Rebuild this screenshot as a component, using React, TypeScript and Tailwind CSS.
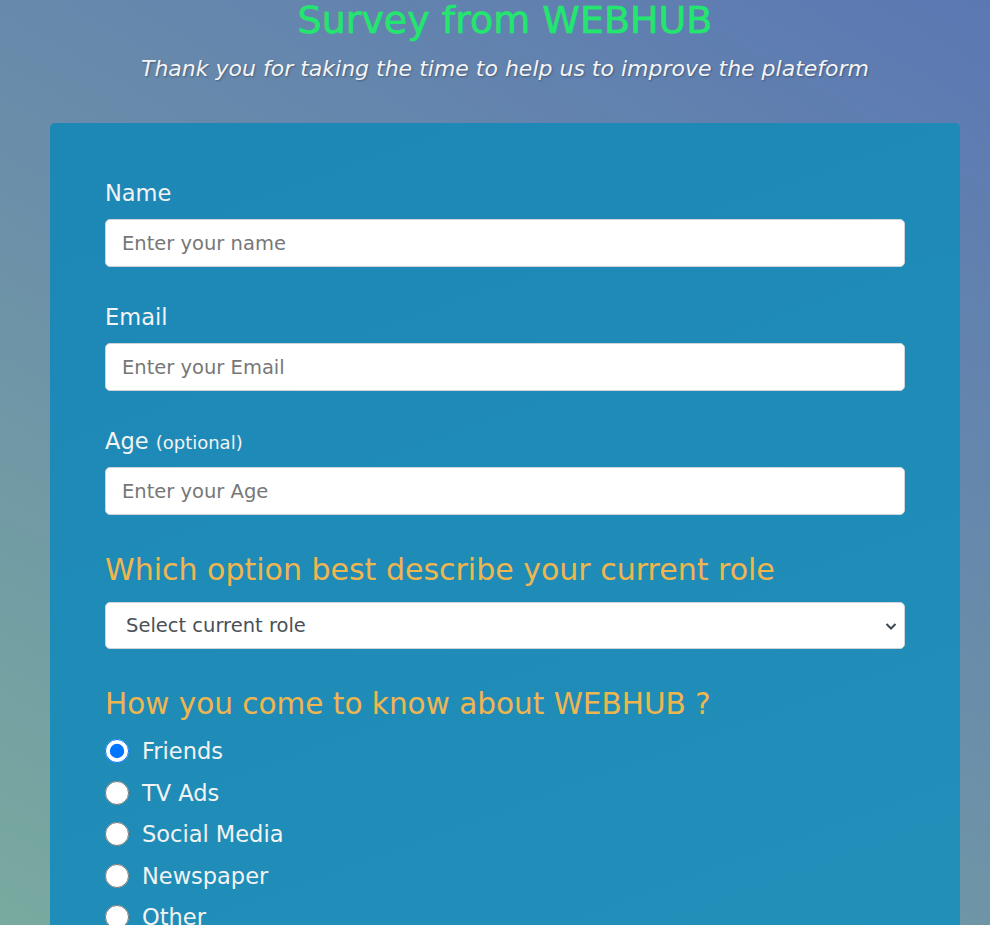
import React from "react";

const font = { fontFamily: '"DejaVu Sans", "Open Sans", sans-serif' };

const inputClass =
  "block h-12 w-full rounded-[5px] border border-[#ced4da] bg-white px-4 text-[19.5px] text-[#495057] placeholder:text-[#777] focus:outline-none";

const labelClass = "mb-[11px] block h-[30px] text-[22.5px] leading-[30px] text-[#f3f3f3]";

const sources = ["Friends", "TV Ads", "Social Media", "Newspaper", "Other"];

export default function App() {
  return (
    <div
      className="h-[925px] w-full overflow-hidden bg-[linear-gradient(30deg,#79aa9f_0%,#6b8fa9_50%,#5b78b3_100%)]"
      style={font}
    >
      <div className="ml-[50px] w-[910px]">
        <header className="text-center">
          <h1 className="mt-[-6px] text-[38px] leading-[52px] text-[#23e66e] [-webkit-text-stroke:0.6px_#23e66e]">
            Survey from WEBHUB
          </h1>
          <p className="mt-2 text-[22px] leading-[30px] italic text-[#f4f4f4] [text-shadow:1px_1px_2px_rgba(0,0,0,0.3)]">
            Thank you for taking the time to help us to improve the plateform
          </p>
        </header>

        <form className="mt-[39px] rounded-[5px] bg-[linear-gradient(160deg,#1d87b6_0%,#2190b9_100%)] px-[55px] pt-[55px] pb-10">
          <div className="mb-[35px]">
            <label className={labelClass}>Name</label>
            <input className={inputClass} placeholder="Enter your name" />
          </div>
          <div className="mb-[35px]">
            <label className={labelClass}>Email</label>
            <input className={inputClass} placeholder="Enter your Email" />
          </div>
          <div className="mb-[35px]">
            <label className={labelClass}>
              Age <span className="text-[18px] leading-none">(optional)</span>
            </label>
            <input className={inputClass} placeholder="Enter your Age" />
          </div>

          <h3 className="mb-3 text-[30px] leading-10 text-[#efb54f]">
            Which option best describe your current role
          </h3>
          <div className="relative">
            <select className="block h-[47px] w-full appearance-none rounded-[5px] border border-[#ced4da] bg-white px-5 text-[19.5px] text-[#495057]">
              <option>Select current role</option>
              <option>Student</option>
              <option>Full time job</option>
              <option>Prefer not to say</option>
            </select>
            <svg
              className="pointer-events-none absolute top-1/2 right-[8px] h-3 w-3 -translate-y-1/2"
              viewBox="0 0 12 12"
              fill="none"
              stroke="#3f4650"
              strokeWidth="2"
            >
              <path d="M1.5 4 6 8.5 10.5 4" />
            </svg>
          </div>

          <h3 className="mt-[35px] mb-3 text-[29.5px] leading-10 text-[#efb54f]">
            How you come to know about WEBHUB ?
          </h3>
          <div className="flex flex-col gap-[11.5px]">
            {sources.map((s, i) => (
              <label
                key={s}
                className="flex h-[30px] items-center gap-[13px] text-[22.5px] leading-[30px] text-[#f3f3f3]"
              >
                <input
                  type="radio"
                  name="source"
                  defaultChecked={i === 0}
                  className="m-0 h-6 w-6"
                />
                {s}
              </label>
            ))}
          </div>
        </form>
      </div>
    </div>
  );
}
